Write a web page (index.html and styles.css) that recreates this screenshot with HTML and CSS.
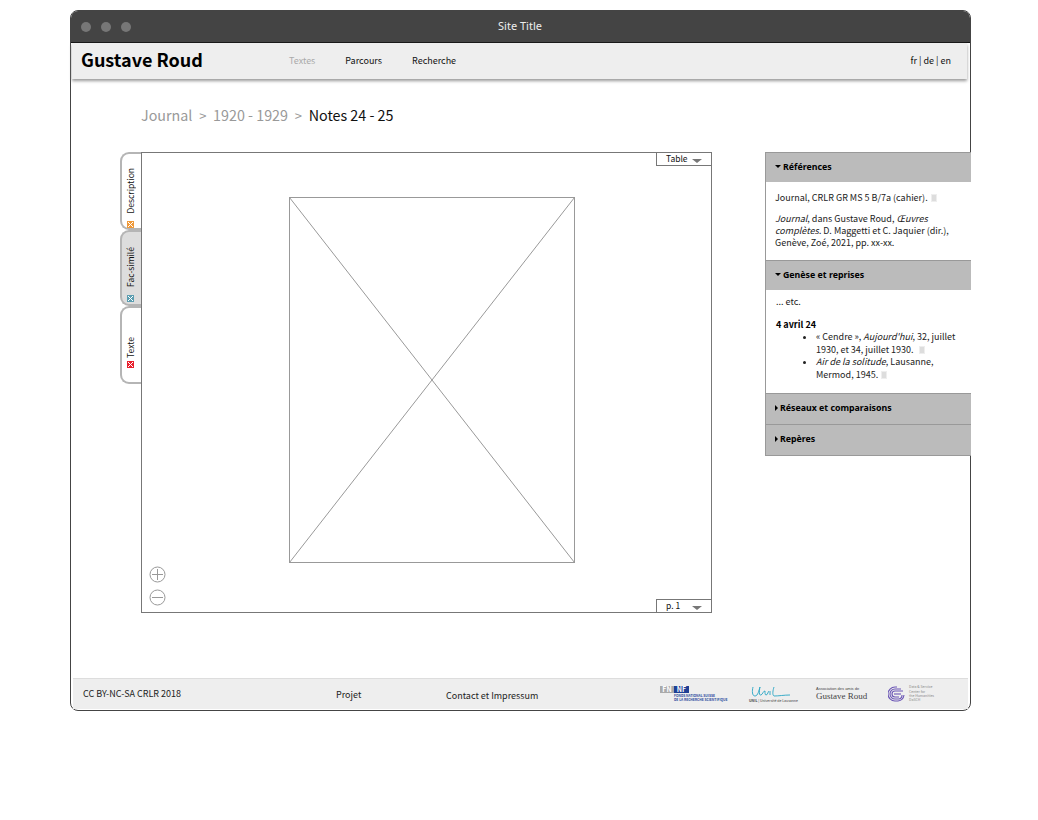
FILE: index.html
```html
<!DOCTYPE html>
<html lang="fr">
  <head>
    <meta charset="utf-8">
    <title>Gustave Roud - Notes 24 - 25</title>
    <link rel="stylesheet" href="styles.css">
  </head>
  <body>
    <div class="window">
      <div class="titlebar">
        <div class="dots"><span class="dot"></span><span class="dot"></span><span class="dot"></span></div>
        <div class="site-title">Site Title</div>
      </div>

      <div class="navbar">
        <div class="brand">Gustave Roud</div>
        <div class="menu">
          <a class="menu-item menu-off">Textes</a>
          <a class="menu-item">Parcours</a>
          <a class="menu-item">Recherche</a>
        </div>
        <div class="langs">fr | de | en</div>
      </div>

      <div class="breadcrumb">
        <span class="crumb-off">Journal</span><span class="crumb-sep">&gt;</span><span class="crumb-off">1920 - 1929</span><span class="crumb-sep">&gt;</span><span>Notes 24 - 25</span>
      </div>

      <div class="content">
        <div class="tabs">
          <div class="tab tab-description">
            <svg class="tab-icon" width="7" height="7" viewBox="0 0 7 7" shape-rendering="crispEdges"><rect width="7" height="7" fill="#f09a3a"/><path d="M1 1H2V2H3V3H4V2H5V1H6V2H5V3H4V4H5V5H6V6H5V5H4V4H3V5H2V6H1V5H2V4H3V3H2V2H1Z" fill="#fff"/></svg>
            <span class="tab-label">Description</span>
          </div>
          <div class="tab tab-facsimile">
            <svg class="tab-icon" width="7" height="7" viewBox="0 0 7 7" shape-rendering="crispEdges"><rect width="7" height="7" fill="#5b9db0"/><path d="M1 1H2V2H3V3H4V2H5V1H6V2H5V3H4V4H5V5H6V6H5V5H4V4H3V5H2V6H1V5H2V4H3V3H2V2H1Z" fill="#fff"/></svg>
            <span class="tab-label">Fac-similé</span>
          </div>
          <div class="tab tab-texte">
            <svg class="tab-icon" width="7" height="7" viewBox="0 0 7 7" shape-rendering="crispEdges"><rect width="7" height="7" fill="#e8202c"/><path d="M1 1H2V2H3V3H4V2H5V1H6V2H5V3H4V4H5V5H6V6H5V5H4V4H3V5H2V6H1V5H2V4H3V3H2V2H1Z" fill="#fff"/></svg>
            <span class="tab-label">Texte</span>
          </div>
        </div>

        <div class="viewer">
          <div class="select select-top">Table<span class="caret"></span></div>
          <svg class="placeholder" width="286" height="366" viewBox="0 0 286 366">
            <rect x="0.5" y="0.5" width="285" height="365" fill="none" stroke="#999"/>
            <path d="M0.5 0.5L285.5 365.5M285.5 0.5L0.5 365.5" stroke="#999" fill="none"/>
          </svg>
          <div class="zoom-btns">
            <svg width="17" height="17" viewBox="0 0 17 17"><circle cx="8.5" cy="8.5" r="7.5" fill="#fff" stroke="#999"/><path d="M3 8.5H14M8.5 3V14" stroke="#999"/></svg>
            <svg width="17" height="17" viewBox="0 0 17 17"><circle cx="8.5" cy="8.5" r="7.5" fill="#fff" stroke="#999"/><path d="M3 8.5H14" stroke="#999"/></svg>
          </div>
          <div class="select select-bottom">p. 1<span class="caret"></span></div>
        </div>

        <div class="sidebar">
          <div class="side-head side-head-1"><span class="arrow-down"></span>Références</div>
          <div class="side-body side-body-1">
            <p>Journal, CRLR GR MS 5 B/7a (cahier). <span class="tofu"></span></p>
            <p><i>Journal</i>, dans Gustave Roud, <i>Œuvres complètes.</i> D. Maggetti et C. Jaquier (dir.), Genève, Zoé, 2021, pp. xx-xx.</p>
          </div>
          <div class="side-head side-head-2"><span class="arrow-down"></span>Genèse et reprises</div>
          <div class="side-body side-body-2">
            <p>... etc.</p>
            <p class="side-date">4 avril 24</p>
            <ul>
              <li>« Cendre », <i>Aujourd'hui</i>, 32, juillet 1930, et 34, juillet 1930. &nbsp;<span class="tofu"></span></li>
              <li><i>Air de la solitude</i>, Lausanne, Mermod, 1945. <span class="tofu"></span></li>
            </ul>
          </div>
          <div class="side-head side-head-3"><span class="arrow-right"></span>Réseaux et comparaisons</div>
          <div class="side-head side-head-4"><span class="arrow-right"></span>Repères</div>
        </div>
      </div>

      <div class="footer">
        <div class="foot-cc">CC BY-NC-SA CRLR 2018</div>
        <div class="foot-projet">Projet</div>
        <div class="foot-contact">Contact et Impressum</div>
        <div class="logos">
          <div class="logo-fns">
            <div class="fns-mark"><span class="fns-grey">FN</span><span class="fns-blue">NF</span></div>
            <div class="fns-text">FONDS NATIONAL SUISSE<br>DE LA RECHERCHE SCIENTIFIQUE</div>
          </div>
          <div class="logo-unil">
            <svg width="44" height="12" viewBox="0 0 44 12"><path d="M4 1C3 5 3 10 6 10C9 10 10 4 11 1C10 5 10 10 12 9C14 8 14 5 16 5C16 7 16 9 17 9C19 9 19 5 20 5M21 5V9M25 1C24 4 23 9 25 10C30 10 35 9 41 9" fill="none" stroke="#27a5c4" stroke-width="0.9"/></svg>
            <div class="unil-text"><b>UNIL</b> | Université de Lausanne</div>
          </div>
          <div class="logo-assoc">
            <div class="assoc-small">Association des amis de</div>
            <div class="assoc-name">Gustave Roud</div>
          </div>
          <div class="logo-dasch">
            <svg width="17" height="16" viewBox="0 0 17 16"><g fill="none" stroke="#6a55b5" stroke-width="1.1"><path d="M9 1H7A7 7 0 0 0 7 15H10A7 7 0 0 0 16 9"/><path d="M13 3H7A5 5 0 0 0 7 13H11A4 4 0 0 0 14 9"/><path d="M15 5H7A3 3 0 0 0 7 11H11"/><path d="M6 8H13"/></g></svg>
            <div class="dasch-text">Data &amp; Service<br>Center for<br>the Humanities<br>DaSCH</div>
          </div>
        </div>
      </div>
    </div>
  </body>
</html>
```

FILE: styles.css
```css
body {
  margin: 0;
  background-color: #fff;
  font-family: "Noto Sans CJK SC", "Noto Sans", sans-serif;
  font-size: 9px;
  color: #111;
}

.window {
  box-sizing: border-box;
  width: 901px;
  height: 701px;
  margin: 10px 0 0 70px;
  border: 1px solid #444;
  border-radius: 8px;
  display: flex;
  flex-direction: column;
  background-color: #fff;
}

/* title bar */
.titlebar {
  flex: none;
  height: 31px;
  display: flex;
  align-items: center;
  background-color: #444;
  border-radius: 7px 7px 0 0;
  border-bottom: 1px solid #111;
}

.dots {
  display: flex;
  gap: 10px;
  padding-left: 10px;
}

.dot {
  width: 10px;
  height: 10px;
  border-radius: 50%;
  background-color: #777;
}

.site-title {
  flex: 1;
  text-align: center;
  font-family: "Noto Sans", sans-serif;
  font-size: 11px;
  color: #eee;
  padding: 0 61px 3px 0;
}

/* nav */
.navbar {
  flex: none;
  height: 36px;
  margin: 0 3px 0 1px;
  display: flex;
  align-items: center;
  background-color: #eee;
  box-shadow: 0 2px 3px #999;
}

.brand {
  width: 208px;
  padding: 0 0 4px 9px;
  font-size: 18px;
  font-weight: 700;
  color: #000;
}

.menu {
  display: flex;
  gap: 30px;
  flex: 1;
  padding-bottom: 1px;
}

.menu-off {
  color: #aaa;
}

.langs {
  padding: 0 16px 1px 0;
}

/* breadcrumb */
.breadcrumb {
  flex: none;
  margin: 25px 0 0 70px;
  height: 22px;
  line-height: 22px;
  font-size: 14.3px;
  color: #111;
}

.crumb-off {
  color: #999;
}

.crumb-sep {
  color: #999;
  margin: 0 6.75px;
  font-size: 13px;
}

/* main area */
.content {
  flex: 1;
  display: flex;
  align-items: flex-start;
  padding: 26px 0 0 49px;
}

.tabs {
  flex: none;
  width: 21px;
}

.tab {
  box-sizing: border-box;
  width: 21px;
  display: flex;
  flex-direction: column-reverse;
  align-items: center;
  padding-right: 3px;
  border: 2px solid #b5b5b5;
  border-right: none;
  border-radius: 9px 0 0 9px;
  background-color: #fff;
}

.tab-description {
  height: 78px;
  gap: 8px;
}

.tab-facsimile {
  height: 76px;
  gap: 8px;
  padding-bottom: 2px;
  background-color: #ddd;
}

.tab-texte {
  height: 78px;
  gap: 3px;
  padding-bottom: 14px;
}

.tab-icon {
  flex: none;
}

.tab-label {
  writing-mode: vertical-rl;
  transform: rotate(180deg);
  font-size: 8.5px;
  line-height: 12px;
}

.viewer {
  box-sizing: border-box;
  flex: none;
  width: 571px;
  height: 461px;
  border: 1px solid #777;
  position: relative;
}

.placeholder {
  display: block;
  margin: 44px 0 0 147px;
}

.select {
  box-sizing: border-box;
  position: absolute;
  right: 0;
  width: 55px;
  height: 14px;
  padding-left: 9px;
  border: 1px solid #777;
  border-right: none;
  background-color: #fff;
  font-size: 8.5px;
  line-height: 11px;
}

.select-top {
  top: -1px;
}

.select-bottom {
  bottom: 0;
  height: 13px;
  border-bottom: none;
}

.caret {
  position: absolute;
  right: 9px;
  top: 6px;
  width: 0;
  height: 0;
  border-left: 5px solid transparent;
  border-right: 5px solid transparent;
  border-top: 4px solid #777;
}

.zoom-btns {
  position: absolute;
  left: 7px;
  bottom: 6px;
  display: flex;
  flex-direction: column;
  gap: 6px;
}

.zoom-btns svg {
  display: block;
}

/* side panel */
.sidebar {
  box-sizing: border-box;
  flex: none;
  width: 206px;
  margin-left: 53px;
  border: 1px solid #999;
  border-right: none;
  border-top: none;
  background-color: #fff;
}

.side-head {
  box-sizing: border-box;
  display: flex;
  align-items: center;
  padding: 0 0 2px 9px;
  background-color: #bbb;
  border-top: 1px solid #999;
  font-family: "Noto Sans", sans-serif;
  font-size: 8.8px;
  font-weight: 700;
  color: #000;
}

.side-head-1,
.side-head-2 {
  height: 30px;
}

.side-head-3,
.side-head-4 {
  height: 31px;
}

.arrow-down {
  width: 0;
  height: 0;
  margin-right: 2px;
  border-left: 3px solid transparent;
  border-right: 3px solid transparent;
  border-top: 3px solid #000;
}

.arrow-right {
  width: 0;
  height: 0;
  margin-right: 2px;
  border-top: 3px solid transparent;
  border-bottom: 3px solid transparent;
  border-left: 3px solid #000;
}

.side-body {
  box-sizing: border-box;
  padding: 0 10px 0 9px;
  line-height: 12px;
  color: #222;
}

.side-body p {
  margin: 0;
}

.side-body-1 {
  height: 78px;
  padding-top: 10px;
}

.side-body-1 p + p {
  margin-top: 9px;
}

.side-body-2 {
  height: 103px;
  padding-top: 6px;
  padding-left: 10px;
}

.side-body p.side-date {
  margin-top: 11px;
  font-weight: 700;
  color: #000;
}

.side-body ul {
  margin: 0;
  padding: 0 0 0 40px;
  line-height: 12.7px;
  list-style-type: disc;
}

.tofu {
  display: inline-block;
  width: 6px;
  height: 8px;
  margin-left: 1px;
  vertical-align: -1px;
  background-color: #ddd;
  border: 1px solid #eee;
  box-sizing: border-box;
}

/* footer */
.footer {
  flex: none;
  height: 31px;
  margin: 0 2px 1px 2px;
  display: flex;
  align-items: center;
  background-color: #eee;
  border-top: 1px solid #ddd;
  box-sizing: border-box;
  color: #222;
}

.foot-cc {
  width: 263px;
  padding: 0 0 2px 10px;
  box-sizing: border-box;
}

.foot-projet {
  width: 110px;
}

.foot-contact {
  width: 214px;
  padding-top: 2px;
}

.logos {
  display: flex;
  align-items: center;
  height: 100%;
}

.logo-fns {
  width: 89px;
}

.fns-mark {
  display: flex;
  font-size: 7px;
  line-height: 7px;
  font-weight: 700;
  color: #fff;
}

.fns-grey {
  width: 14px;
  background-color: #aaa;
  text-align: center;
}

.fns-blue {
  width: 15px;
  background-color: #1f3f95;
  text-align: center;
}

.fns-text {
  margin: 1px 0 0 14px;
  font-size: 3.3px;
  line-height: 4px;
  font-weight: 700;
  color: #2b4a9c;
  white-space: nowrap;
}

.logo-unil {
  width: 67px;
}

.logo-unil svg {
  display: block;
}

.unil-text {
  font-size: 3.5px;
  line-height: 5px;
  color: #444;
  white-space: nowrap;
}

.logo-assoc {
  width: 72px;
  font-family: "Liberation Serif", serif;
  color: #444;
}

.assoc-small {
  font-size: 4px;
  line-height: 4px;
  font-family: "Liberation Sans", sans-serif;
}

.assoc-name {
  font-size: 9px;
  line-height: 10px;
  white-space: nowrap;
}

.logo-dasch {
  display: flex;
  align-items: center;
  gap: 4px;
}

.dasch-text {
  font-size: 3.5px;
  line-height: 4.4px;
  color: #888;
  white-space: nowrap;
}
```
